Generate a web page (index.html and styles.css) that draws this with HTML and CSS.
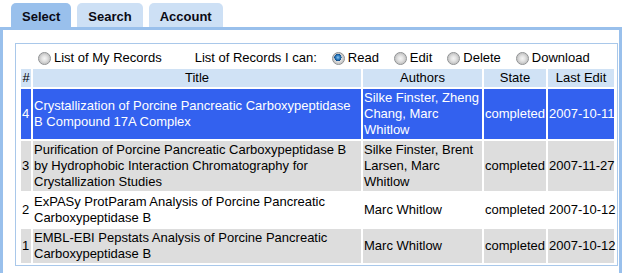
FILE: index.html
```html
<!DOCTYPE html>
<html>
<head>
<meta charset="utf-8">
<link rel="stylesheet" href="styles.css">
</head>
<body>
<div class="tabs">
  <div class="tab active">Select</div>
  <div class="tab">Search</div>
  <div class="tab">Account</div>
</div>
<div class="panel">
  <div class="box">
    <div class="filters">
      <label class="opt"><input type="radio" name="mine" class="radio"><span>List of My Records</span></label>
      <span class="caption">List of Records I can:</span>
      <label class="opt"><input type="radio" name="perm" class="radio" checked><span>Read</span></label>
      <label class="opt"><input type="radio" name="perm" class="radio"><span>Edit</span></label>
      <label class="opt"><input type="radio" name="perm" class="radio"><span>Delete</span></label>
      <label class="opt"><input type="radio" name="perm" class="radio"><span>Download</span></label>
    </div>
    <table class="records">
      <thead>
        <tr>
          <th class="c-num">#</th>
          <th class="c-title">Title</th>
          <th class="c-auth">Authors</th>
          <th class="c-state">State</th>
          <th class="c-date">Last Edit</th>
        </tr>
      </thead>
      <tbody>
        <tr class="selected">
          <td>4</td>
          <td>Crystallization of Porcine Pancreatic Carboxypeptidase B Compound 17A Complex</td>
          <td>Silke Finster, Zheng Chang, Marc Whitlow</td>
          <td class="nowrap">completed</td>
          <td class="nowrap">2007-10-11</td>
        </tr>
        <tr class="gray">
          <td>3</td>
          <td>Purification of Porcine Pancreatic Carboxypeptidase B by Hydrophobic Interaction Chromatography for Crystallization Studies</td>
          <td>Silke Finster, Brent Larsen, Marc Whitlow</td>
          <td class="nowrap">completed</td>
          <td class="nowrap">2007-11-27</td>
        </tr>
        <tr class="white">
          <td>2</td>
          <td>ExPASy ProtParam Analysis of Porcine Pancreatic Carboxypeptidase B</td>
          <td>Marc Whitlow</td>
          <td class="nowrap">completed</td>
          <td class="nowrap">2007-10-12</td>
        </tr>
        <tr class="gray">
          <td>1</td>
          <td>EMBL-EBI Pepstats Analysis of Porcine Pancreatic Carboxypeptidase B</td>
          <td>Marc Whitlow</td>
          <td class="nowrap">completed</td>
          <td class="nowrap">2007-10-12</td>
        </tr>
      </tbody>
    </table>
  </div>
</div>
</body>
</html>
```
FILE: styles.css
```css
html, body {
  margin: 0;
  padding: 0;
  background: #ffffff;
  font-family: "Liberation Sans", Arial, sans-serif;
  font-size: 13px;
  color: #000;
}

.tabs {
  display: flex;
  gap: 6px;
  padding: 3px 0 0 11px;
}

.tab {
  height: 24px;
  box-sizing: border-box;
  padding: 4px 11px 0 11px;
  line-height: 20px;
  font-weight: bold;
  background: #cde0f5;
  border-radius: 5px 5px 0 0;
  color: #0a0a14;
}

.tab.active {
  background: #99c0ec;
}

.panel {
  border: 3px solid #99c0ec;
  padding: 13px 1px 12px 12px;
}

.box {
  border: 1px solid #a9c8ea;
}

.filters {
  display: flex;
  align-items: center;
  padding: 6px 0 1px 22px;
  line-height: 16px;
  height: 16px;
}

.opt {
  display: flex;
  align-items: center;
  margin-right: 15px;
}

.opt:first-child {
  margin-right: 33px;
}

.caption {
  margin-right: 15px;
}

.radio {
  appearance: none;
  -webkit-appearance: none;
  width: 13px;
  height: 13px;
  margin: 0 3px 0 0;
  border-radius: 50%;
  box-sizing: border-box;
  border: 1px solid #8d8f91;
  background: radial-gradient(circle at 50% 50%, #f4f4f4 0, #e4e4e4 2.5px, #c9c9c9 5px, #dcdcdc 6px);
}

.radio:checked {
  background:
    radial-gradient(circle at 45% 40%, #8ec6f0 0, #2f7fc4 2px, #0e4a86 3.5px, rgba(0,0,0,0) 3.7px),
    radial-gradient(circle at 50% 50%, #f4f4f4 0, #e4e4e4 2.5px, #c9c9c9 5px, #dcdcdc 6px);
}

.records {
  table-layout: fixed;
  width: 597px;
  margin-left: 3px;
  border-spacing: 2px;
  line-height: 16px;
}

.records th,
.records td {
  box-sizing: border-box;
  padding: 1px;
  vertical-align: middle;
}

.records th {
  font-weight: normal;
  text-align: center;
  background: #d0e2f5;
}

.records td {
  text-align: left;
}

.records td.nowrap {
  white-space: nowrap;
}

.c-num { width: 10px; }
.c-title { width: 328px; }
.c-auth { width: 119px; }
.c-state { width: 62px; }
.c-date { width: 66px; }

.records tr.selected td {
  background: #3361ef;
  color: #ffffff;
}

.records tr.gray td {
  background: #dddddd;
}

.records tr.white td {
  background: #ffffff;
}
```
